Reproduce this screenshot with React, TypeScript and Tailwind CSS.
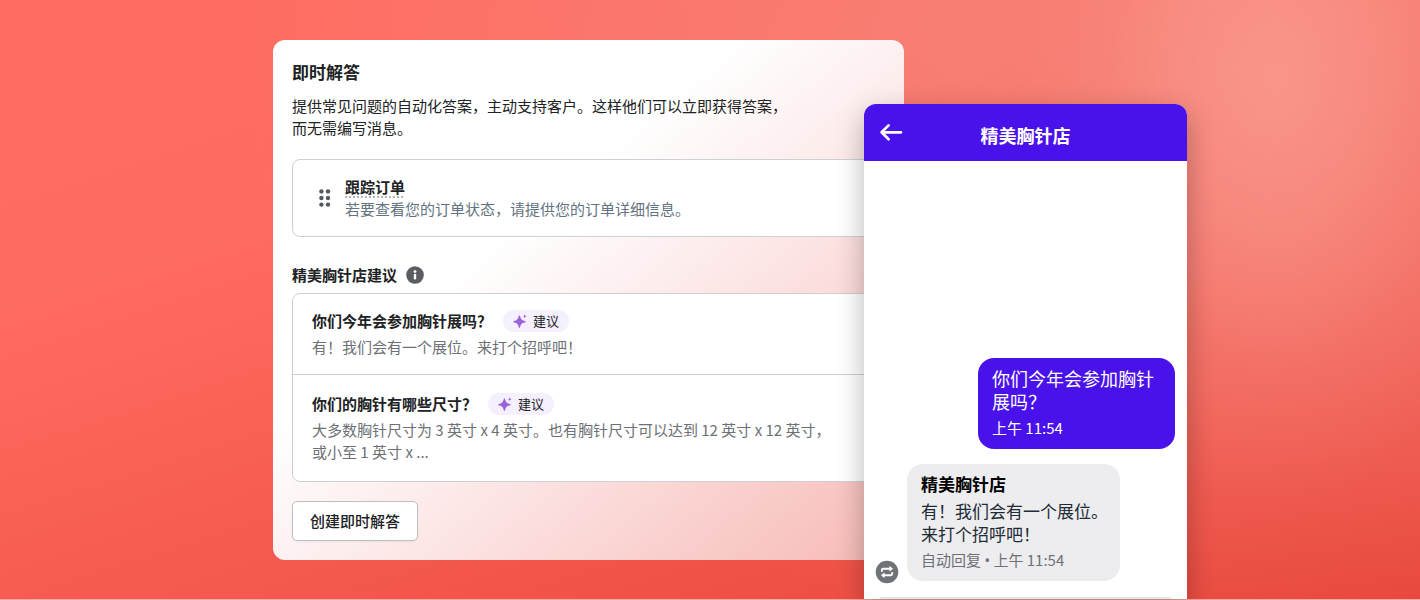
import type { ReactNode } from "react";

const SUGGESTIONS = [
  {
    question: "你们今年会参加胸针展吗？",
    answer: "有！我们会有一个展位。来打个招呼吧！",
    padding: "py-4",
  },
  {
    question: "你们的胸针有哪些尺寸？",
    answer: (
      <>
        大多数胸针尺寸为 3 英寸 x 4 英寸。也有胸针尺寸可以达到 12 英寸 x 12 英寸，
        <br />
        或小至 1 英寸 x ...
      </>
    ),
    padding: "py-[18px]",
  },
];

function DragHandle() {
  return (
    <svg viewBox="0 0 12 18" className="h-[18px] w-3 shrink-0 fill-[#55595d]" aria-hidden="true">
      {[2.4, 9, 15.6].map((y) => (
        <g key={y}>
          <circle cx="2.4" cy={y} r="2.2" />
          <circle cx="9" cy={y} r="2.2" />
        </g>
      ))}
    </svg>
  );
}

function InfoIcon() {
  return (
    <svg viewBox="0 0 18 18" className="size-[18px]" aria-hidden="true">
      <circle cx="9" cy="9" r="8.8" fill="#5a5d61" />
      <circle cx="9" cy="5.6" r="1.4" fill="#fff" />
      <rect x="7.8" y="7.8" width="2.4" height="5.6" rx="1" fill="#fff" />
    </svg>
  );
}

function SparkleIcon() {
  return (
    <svg viewBox="0 0 14 14" className="size-3.5 fill-[#9a63dd]" aria-hidden="true">
      <path d="M6.4 1.4c.5 0 .6.4.8 1.1.6 2.6 1.3 3.6 4.3 4.4.8.2 1.3.3 1.3.8s-.5.6-1.3.8c-3 .7-3.7 1.7-4.3 4.2-.2.7-.3 1.1-.8 1.1s-.6-.4-.8-1.1C5 10.2 4.3 9.2 1.4 8.5.6 8.3.2 8.2.2 7.7s.4-.6 1.2-.8c2.9-.8 3.6-1.8 4.2-4.4.2-.7.3-1.1.8-1.1Z" />
      <path d="M11.8.3c.3 1.3.5 1.6 1.9 2-1.4.4-1.6.7-1.9 2-.3-1.3-.6-1.6-1.9-2 1.3-.4 1.6-.7 1.9-2Z" />
    </svg>
  );
}

function BackArrow() {
  return (
    <svg
      viewBox="0 0 24 20"
      className="h-5 w-6"
      fill="none"
      stroke="#fff"
      strokeWidth="2.7"
      strokeLinecap="round"
      strokeLinejoin="round"
      aria-hidden="true"
    >
      <path d="M2.6 9.3h19.4M9.6 2.4 2.6 9.3l7 6.900" />
    </svg>
  );
}

function RepeatIcon() {
  return (
    <svg viewBox="0 0 24 24" className="size-6 shrink-0" aria-hidden="true">
      <circle cx="12" cy="12" r="11.3" fill="#6f7276" />
      <g fill="none" stroke="#fff" strokeWidth="1.9" strokeLinecap="round" strokeLinejoin="round">
        <path d="M6.900 11v-1c0-.8.4-1.200 1.200-1.200h7.400" />
        <path d="M17.100 13v1c0 .8-.4 1.200-1.200 1.200H8.500" />
      </g>
      <path
        d="M14.800 6.500 17.600 8.800l-2.800 2.300ZM9.200 12.900 6.400 15.200l2.800 2.300Z"
        fill="#fff"
        stroke="#fff"
        strokeWidth=".7"
        strokeLinejoin="round"
      />
    </svg>
  );
}

function SuggestionBadge() {
  return (
    <span className="flex h-[22px] items-center gap-1.5 rounded-full bg-[#f5effe] px-2.5 text-[13px] text-[#202223]">
      <SparkleIcon />
      建议
    </span>
  );
}

function AnswersCard() {
  return (
    <section className="mt-10 w-[631px] shrink-0 self-start rounded-xl bg-[linear-gradient(140deg,#ffffff_37%,#fdecec_55%,#f8c4c1_90%,#f6b9b6_100%)] px-[19px] pt-5 pb-[19px] text-[15px] leading-[22px] text-[#202223]">
      <h1 className="text-[17px] leading-6 font-bold">即时解答</h1>
      <p className="mt-[11px]">
        提供常见问题的自动化答案，主动支持客户。这样他们可以立即获得答案，
        <br />
        而无需编写消息。
      </p>

      <div className="mt-5 flex items-center gap-3.5 rounded-lg border border-[#cdd1d4] bg-white py-4 pl-[26px]">
        <DragHandle />
        <div>
          <h2 className="font-bold underline decoration-[#b4b8bd] decoration-dotted decoration-2 underline-offset-3">
            跟踪订单
          </h2>
          <p className="text-[#637381]">若要查看您的订单状态，请提供您的订单详细信息。</p>
        </div>
      </div>

      <h2 className="mt-[27px] flex items-center gap-[9px] font-bold">
        精美胸针店建议
        <InfoIcon />
      </h2>
      <ul className="mt-[7px] divide-y divide-[#cdd1d4] rounded-lg border border-[#cdd1d4] bg-white">
        {SUGGESTIONS.map(({ question, answer, padding }) => (
          <li key={question} className={`px-[19px] ${padding}`}>
            <div className="flex items-center gap-[11px]">
              <h3 className="font-bold">{question}</h3>
              <SuggestionBadge />
            </div>
            <p className="mt-1 text-[#6d7175]">{answer}</p>
          </li>
        ))}
      </ul>

      <button
        type="button"
        className="mt-[19px] h-10 rounded-[5px] border border-[#babfc3] bg-white px-[17px] font-medium shadow-xs"
      >
        创建即时解答
      </button>
    </section>
  );
}

function Bubble({ className, children }: { className: string; children: ReactNode }) {
  return <div className={`rounded-2xl pl-3.5 ${className}`}>{children}</div>;
}

function ChatPreview() {
  return (
    <section className="relative mt-[104px] -ml-10 flex w-[323px] shrink-0 flex-col rounded-t-xl bg-white shadow-[0_10px_28px_rgba(0,0,0,0.28)]">
      <header className="grid h-[57px] grid-cols-[24px_1fr_24px] items-center rounded-t-xl bg-[#4a12eb] px-[15px]">
        <button type="button" aria-label="返回">
          <BackArrow />
        </button>
        <h2 className="pt-1 text-center text-lg font-bold text-white">精美胸针店</h2>
      </header>

      <div className="flex grow flex-col justify-end pr-3 pb-[13px] pl-[11px]">
        <Bubble className="w-[197px] self-end bg-[#4a12eb] pt-[9px] pr-3.5 pb-2.5 text-white">
          <p className="text-lg leading-[23px]">你们今年会参加胸针展吗？</p>
          <p className="mt-1 text-[15px] leading-[22px]">上午 11:54</p>
        </Bubble>
        <div className="mt-[15px] flex items-end gap-2">
          <RepeatIcon />
          <Bubble className="mb-[3px] w-[213px] bg-[#ededef] pt-2 pb-2.5 text-[17px] leading-[23px] text-[#212b36]">
            <h3 className="font-bold text-black">精美胸针店</h3>
            <p className="mt-1">
              有！我们会有一个展位。
              <br />
              来打个招呼吧！
            </p>
            <p className="mt-1 text-[15px] leading-[22px] text-[#6d7175]">
              自动回复 <span className="font-['Noto_Sans',sans-serif]">•</span> 上午 11:54
            </p>
          </Bubble>
        </div>
      </div>
      <div className="mx-4 h-0.5 bg-[#e6e6e8]" />
    </section>
  );
}

export default function App() {
  return (
    <main className="flex min-h-screen justify-center border-b border-[#f7aaa3] bg-[radial-gradient(ellipse_250px_420px_at_90%_14%,rgba(255,180,168,0.42),rgba(253,172,160,0.32)_35%,rgba(252,160,148,0.12)_70%,transparent),radial-gradient(ellipse_1000px_560px_at_86%_12%,rgba(243,142,131,0.68),rgba(243,142,131,0.5)_35%,transparent),linear-gradient(162deg,#ff6d62_0%,#ff6b60_30%,#f65a50_60%,#e8463b_100%)] pl-10 font-['Noto_Sans_CJK_SC',sans-serif]">
      <AnswersCard />
      <ChatPreview />
    </main>
  );
}
